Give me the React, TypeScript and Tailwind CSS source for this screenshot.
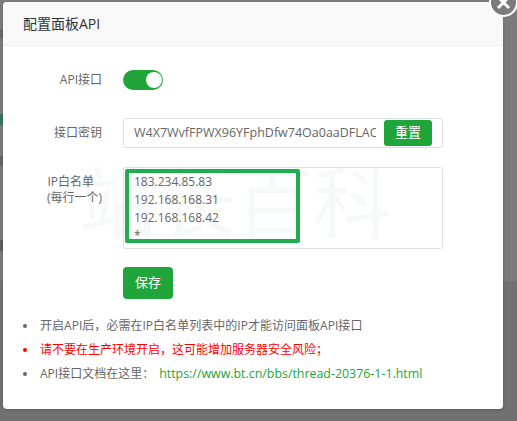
const fontStack = "font-['Open_Sans','Noto_Sans_CJK_SC',sans-serif]";

export default function App() {
  return (
    <div className={`relative h-[421px] w-[517px] overflow-hidden bg-[linear-gradient(#7b7b7b_281px,#717171_281px)] ${fontStack}`}>
      {/* page behind the overlay, cut off by the modal */}
      <div className="absolute left-0 top-[29px] h-[10px] w-[3px] bg-[#6a6a6a]" />
      <div className="absolute left-0 top-[114px] h-[11px] w-[3px] bg-[#3f6f68]" />
      <div className="absolute left-0 top-[156px] h-[10px] w-[3px] bg-[#666666]" />
      <div className="absolute left-0 top-[240px] h-[11px] w-[3px] bg-[#5e5e5e]" />

      <div className="relative ml-[3px] mt-[2px] h-[407px] w-[500px] rounded-[4px] bg-white shadow-[0_1px_3px_rgba(0,0,0,0.2)]">
        <div className="flex h-[44px] items-center rounded-t-[4px] border-b border-[#eeeeee] bg-[#f8f8f8] pl-[20px] text-[14px] text-[#333333]">
          配置面板API
        </div>

        {/* watermark */}
        <div className="pointer-events-none absolute left-[76px] top-[152px] flex text-[78px] font-normal leading-[96px] text-[#f6f8fa]">
          站长百科
        </div>

        <div className="relative flex flex-col pt-[24px] text-[12px] text-[#666666]">
          <div className="flex h-[20px] items-center">
            <div className="w-[100px] pr-[1px] text-right">API接口</div>
            <div className="ml-[20px] flex h-[20px] w-[40px] items-center justify-end rounded-full bg-[#20a53a] pr-[1px]">
              <div className="h-[16px] w-[16px] rounded-full bg-white" />
            </div>
          </div>

          <div className="mt-[28px] flex items-center">
            <div className="w-[100px] pr-[1px] text-right">接口密钥</div>
            <div className="ml-[20px] flex h-[30px] w-[320px] items-center rounded-[3px] border border-[#dfdfe6] pl-[10px] pr-[10px]">
              <div className="w-[242px] overflow-hidden whitespace-nowrap text-[12.5px]">W4X7WvfFPWX96YFphDfw74Oa0aaDFLAC</div>
              <button className="ml-auto h-[26px] w-[48px] rounded-[3px] bg-[#20a53a] text-[13px] text-white">重置</button>
            </div>
          </div>

          <div className="mt-[19px] flex">
            <div className="w-[100px] pr-[1px] pt-[7px] text-right leading-[16px]">
              <div className="pr-[8px]">IP白名单</div>
              <div>(每行一个)</div>
            </div>
            <div className="ml-[20px] relative h-[82px] w-[320px] rounded-[3px] border border-[#dfdfe6] pl-[10px] pt-[5px] leading-[18px]">
              <div>183.234.85.83</div>
              <div>192.168.168.31</div>
              <div>192.168.168.42</div>
              <div>*</div>
              <div className="absolute left-[1px] top-[1px] h-[74px] w-[175px] rounded-[2px] border-[4px] border-[#20ad4e]" />
            </div>
          </div>

          <button className="ml-[120px] mt-[18px] h-[32px] w-[50px] rounded-[4px] bg-[#20a53a] text-[13px] text-white">保存</button>

          <ul className="ml-[20px] mt-[18px] flex flex-col gap-[7px] text-[12px] leading-[17px]">
            <li className="flex items-center">
              <span className="mr-[13px] h-[4px] w-[4px] rounded-full bg-[#666666]" />
              <span className="tracking-[0.03px]">开启API后，必需在IP白名单列表中的IP才能访问面板API接口</span>
            </li>
            <li className="flex items-center text-[#ff0000]">
              <span className="mr-[13px] h-[4px] w-[4px] rounded-full bg-[#ff0000]" />
              请不要在生产环境开启，这可能增加服务器安全风险；
            </li>
            <li className="flex items-center">
              <span className="mr-[13px] h-[4px] w-[4px] rounded-full bg-[#666666]" />
              API接口文档在这里：
              <a className="ml-[5px] text-[12.4px] text-[#20a53a]">https://www.bt.cn/bbs/thread-20376-1-1.html</a>
            </li>
          </ul>
        </div>
      </div>

      {/* close button */}
      <div className="absolute left-[489px] top-[-12px] flex h-[29px] w-[29px] items-center justify-center rounded-full border-[2px] border-white bg-[#7b7b7b]">
        <svg width="15" height="15" viewBox="0 0 15 15" stroke="white" strokeWidth="3">
          <path d="M2 2 L13 13 M13 2 L2 13" />
        </svg>
      </div>
    </div>
  );
}
